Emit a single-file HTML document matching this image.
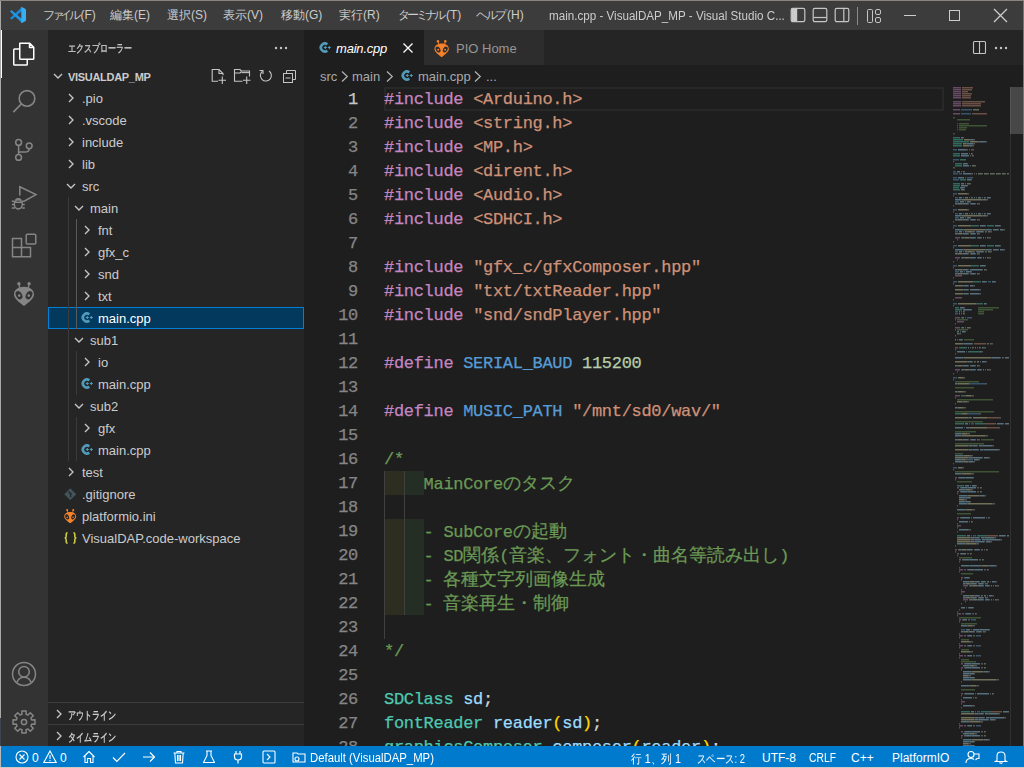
<!DOCTYPE html>
<html><head><meta charset="utf-8">
<style>
*{margin:0;padding:0;box-sizing:border-box}
html,body{width:1024px;height:768px;overflow:hidden;background:#1e1e1e;font-family:"Liberation Sans",sans-serif;font-size:13px;color:#cccccc}
.abs{position:absolute}
#title{left:0;top:0;width:1024px;height:30px;background:#3c3c3c}
#act{left:0;top:30px;width:48px;height:716px;background:#333333}
#side{left:48px;top:30px;width:256px;height:716px;background:#252526}
#tabs{left:304px;top:30px;width:720px;height:35px;background:#252526}
#editor{left:304px;top:65px;width:720px;height:681px}
#status{left:0;top:746px;width:1024px;height:22px;background:#007acc;color:#fff}
.menu{top:7px;font-size:12px;color:#cccccc;white-space:nowrap}
.tree{left:48px;width:256px;height:22px;line-height:22px;font-size:13px;color:#cccccc;white-space:nowrap}
.tree .t{position:absolute;top:1px}
.chev{position:absolute;top:6px;width:10px;height:10px}
.code{position:absolute;left:384px;padding-top:1px;font-family:"Liberation Mono",monospace;font-size:17px;letter-spacing:-0.3px;-webkit-text-stroke:0.25px;line-height:24px;white-space:pre;color:#d4d4d4}
.ln{position:absolute;left:304px;width:54px;padding-top:1px;text-align:right;font-family:"Liberation Mono",monospace;font-size:17px;letter-spacing:-0.3px;-webkit-text-stroke:0.25px;line-height:24px;color:#858585}
.k{color:#c586c0}.s{color:#ce9178}.c{color:#6a9955}.ty{color:#4ec9b0}.v{color:#9cdcfe}.n{color:#b5cea8}.m{color:#569cd6}.f{color:#dcdcaa}.b{color:#ffd700}
.j{font-size:18px;letter-spacing:0}
.sb{top:5px;font-size:12px;transform-origin:0 0;color:#fff;white-space:nowrap}
</style></head><body>
<svg width="0" height="0" style="position:absolute"><defs><mask id="am" maskUnits="userSpaceOnUse" x="0" y="0" width="24" height="24"><rect width="24" height="24" fill="#fff"/><ellipse cx="7" cy="13.2" rx="3" ry="4.4" transform="rotate(-28 7 13.2)" fill="#000"/><ellipse cx="17" cy="13.2" rx="3" ry="4.4" transform="rotate(28 17 13.2)" fill="#000"/><circle cx="7.2" cy="13.6" r="1.3" fill="#fff"/><circle cx="16.8" cy="13.6" r="1.3" fill="#fff"/></mask>
<symbol id="alien" viewBox="0 0 24 24"><g mask="url(#am)"><path d="M12 4.8 C18 4.8 22 8 22 12.5 C22 16.5 16.5 20.5 12 24 C7.5 20.5 2 16.5 2 12.5 C2 8 6 4.8 12 4.8 Z"/><path d="M7.2 2 L7.6 6 M16.8 2 L16.4 6" stroke-width="1.3" stroke="currentColor"/><circle cx="6.9" cy="1.8" r="1.7"/><circle cx="17.1" cy="1.8" r="1.7"/></g></symbol></defs></svg>
<div id="title" class="abs">
<svg class="abs" style="left:0;top:0" width="30" height="30"><path d="M10 18.3 L11.5 19.8 L22 11 L22 7 Z" fill="#1a8ad8"/><path d="M10 11.5 L11.5 10 L22 19 L22 23 Z" fill="#2196e3"/><path d="M21.3 6.8 L25.2 8.7 L26 9.7 V20.3 L25.2 21.3 L21.3 23.2 Z" fill="#38adf5"/></svg>
<span class="abs menu" style="left:43px"><span class="kk" style="letter-spacing:-3.5px;margin-right:3.5px">ファイル</span>(F)</span>
<span class="abs menu" style="left:110px">編集(E)</span>
<span class="abs menu" style="left:167px">選択(S)</span>
<span class="abs menu" style="left:223px">表示(V)</span>
<span class="abs menu" style="left:281px">移動(G)</span>
<span class="abs menu" style="left:339px">実行(R)</span>
<span class="abs menu" style="left:398px"><span class="kk" style="letter-spacing:-3px;margin-right:3px">ターミナル</span>(T)</span>
<span class="abs menu" style="left:476px"><span class="kk" style="letter-spacing:-2.5px;margin-right:2.5px">ヘルプ</span>(H)</span>
<span class="abs menu" style="left:549px;top:9px;font-size:12.5px;transform:scaleX(0.93);transform-origin:0 0">main.cpp - VisualDAP_MP - Visual Studio C...</span>
<svg class="abs" style="left:790px;top:7px" width="16" height="16"><rect x="1.2" y="1.3" width="6" height="13.4" rx="1.2" fill="#cccccc"/><rect x="1.2" y="1.3" width="13.6" height="13.4" rx="1.6" fill="none" stroke="#c5c5c5" stroke-width="1.2"/></svg>
<svg class="abs" style="left:812px;top:7px" width="16" height="16"><rect x="1.2" y="1.3" width="13.6" height="13.4" rx="1.6" fill="none" stroke="#c5c5c5" stroke-width="1.2"/><line x1="1.5" y1="10.5" x2="14.5" y2="10.5" stroke="#c5c5c5" stroke-width="1.2"/></svg>
<svg class="abs" style="left:834px;top:7px" width="16" height="16"><rect x="1.2" y="1.3" width="13.6" height="13.4" rx="1.6" fill="none" stroke="#c5c5c5" stroke-width="1.2"/><line x1="9.8" y1="1.5" x2="9.8" y2="14.5" stroke="#c5c5c5" stroke-width="1.2"/></svg>
<div class="abs" style="left:857px;top:7px;width:1px;height:18px;background:#8a8a8a"></div>
<svg class="abs" style="left:866px;top:8px" width="16" height="16"><rect x="1.5" y="1.5" width="5" height="13" rx="1" fill="none" stroke="#c5c5c5"/><rect x="9.5" y="1.5" width="5" height="5" rx="1.5" fill="none" stroke="#c5c5c5"/><rect x="9.5" y="9.5" width="5" height="5" rx="1.5" fill="none" stroke="#c5c5c5"/></svg>
<div class="abs" style="left:904px;top:15px;width:12px;height:1px;background:#cccccc"></div>
<div class="abs" style="left:949px;top:10px;width:11px;height:11px;border:1px solid #cccccc"></div>
<svg class="abs" style="left:993px;top:8px" width="15" height="15"><path d="M1 1 L14 14 M14 1 L1 14" stroke="#cccccc" stroke-width="1.3"/></svg>
</div>
<div id="act" class="abs">
<div class="abs" style="left:0;top:0;width:2px;height:48px;background:#ffffff"></div>
<svg class="abs" style="left:8px;top:6px" width="32" height="32" viewBox="0 0 32 32" fill="none" stroke="#ffffff" stroke-width="1.5" stroke-linejoin="round"><path d="M11.75 7.15 H21.5 L25.75 11.4 V22.5 Q25.75 23.25 25 23.25 H12.5 Q11.75 23.25 11.75 22.5 Z M21.5 7.15 V11.4 H25.75"/><path d="M11.75 12.95 H6.5 Q5.75 12.95 5.75 13.7 V28.3 Q5.75 29.05 6.5 29.05 H18.5 Q19.25 29.05 19.25 28.3 V23.25"/></svg>
<svg class="abs" style="left:8px;top:52px" width="32" height="32" viewBox="0 0 32 32" fill="none" stroke="#858585" stroke-width="1.6"><circle cx="19" cy="16.4" r="7.8"/><path d="M13.5 21.9 L5.3 30.1"/></svg>
<svg class="abs" style="left:8px;top:104px" width="32" height="32" viewBox="0 0 32 32" fill="none" stroke="#858585" stroke-width="1.5"><circle cx="10.6" cy="8.4" r="2.9"/><circle cx="10.6" cy="23.4" r="2.9"/><circle cx="21.2" cy="11.8" r="2.9"/><path d="M10.6 11.3 V20.5"/><path d="M21.2 14.7 Q21.2 18 17 18 H10.6"/></svg>
<svg class="abs" style="left:8px;top:150px" width="32" height="32" viewBox="0 0 32 32" fill="none" stroke="#858585" stroke-width="1.5"><path d="M11.8 15.5 V6.8 L28 14.6 L16.5 21"/><ellipse cx="10.3" cy="24.3" rx="4" ry="4.6"/><path d="M7.5 20 Q10.3 17.5 13.1 20 M3.8 21.3 H6.5 M14.1 21.3 H16.8 M3.8 24.5 H6.3 M14.3 24.5 H16.8 M3.8 28 H6.8 M13.8 28 H16.8 M6.5 22.3 H14.1"/></svg>
<svg class="abs" style="left:8px;top:200px" width="32" height="32" viewBox="0 0 32 32" fill="none" stroke="#858585" stroke-width="1.5"><path d="M4.5 8.5 H13.5 V17.5 H22.5 V26.7 H4.5 Z M4.5 17.5 H13.5 V26.7"/><rect x="18.2" y="4.3" width="9.6" height="9.6" rx="1.2"/></svg>
<svg class="abs" style="left:12px;top:252px;color:#858585;fill:#858585" width="24" height="24"><use href="#alien"/></svg>
<svg class="abs" style="left:11px;top:631px" width="26" height="26" viewBox="0 0 26 26" fill="none" stroke="#858585" stroke-width="1.5"><circle cx="13" cy="13" r="11.5"/><circle cx="13" cy="10.8" r="5.3"/><path d="M5.8 21.8 Q7.5 16.2 13 16.2 Q18.5 16.2 20.2 21.8"/></svg>
<svg class="abs" style="left:11px;top:679px" width="26" height="26" viewBox="0 0 26 26" fill="none" stroke="#858585" stroke-width="1.5" stroke-linejoin="round"><path d="M10.93 5.27 L10.86 2.01 L15.14 2.01 L15.07 5.27 L17.00 6.07 L19.26 3.71 L22.29 6.74 L19.93 9.00 L20.73 10.93 L23.99 10.86 L23.99 15.14 L20.73 15.07 L19.93 17.00 L22.29 19.26 L19.26 22.29 L17.00 19.93 L15.07 20.73 L15.14 23.99 L10.86 23.99 L10.93 20.73 L9.00 19.93 L6.74 22.29 L3.71 19.26 L6.07 17.00 L5.27 15.07 L2.01 15.14 L2.01 10.86 L5.27 10.93 L6.07 9.00 L3.71 6.74 L6.74 3.71 L9.00 6.07 Z"/><circle cx="13" cy="13" r="2.6"/></svg>
</div>
<div id="side" class="abs"></div>
<span class="abs" style="left:68px;top:41px;font-size:11px;color:#cccccc;-webkit-text-stroke:0.3px;transform:scaleX(0.73);transform-origin:0 0;white-space:nowrap">エクスプローラー</span>
<svg class="abs" style="left:274px;top:46px" width="16" height="4"><circle cx="2" cy="2" r="1.2" fill="#c5c5c5"/><circle cx="7" cy="2" r="1.2" fill="#c5c5c5"/><circle cx="12" cy="2" r="1.2" fill="#c5c5c5"/></svg>
<div class="abs tree" style="top:65px">
<svg class="chev" style="left:5px" viewBox="0 0 10 10"><path d="M1 3 L5 7 L9 3" fill="none" stroke="#c5c5c5" stroke-width="1.35"/></svg>
<span class="t" style="left:20px;font-size:11px;font-weight:bold;color:#cccccc;letter-spacing:-0.3px">VISUALDAP_MP</span>
<svg class="abs" style="left:161px;top:3px" width="18" height="17" viewBox="0 0 18 17" fill="none" stroke="#c5c5c5" stroke-width="1.1"><path d="M9 13.3 H3.2 V1.5 H10 L14 5.5 V7.2"/><path d="M10 1.5 V5.5 H14"/><path d="M13.3 8.5 V16 M9.5 12.2 H17"/></svg>
<svg class="abs" style="left:185px;top:3px" width="18" height="17" viewBox="0 0 18 17" fill="none" stroke="#c5c5c5" stroke-width="1.1"><path d="M9.5 13.3 H1.5 V1.5 H7 L8.5 3 H16.5 V8.5"/><path d="M1.5 5 H7 L8.5 3.5"/><path d="M8.5 4.6 H16.5"/><path d="M13.7 8.5 V16 M10 12.2 H17.5"/></svg>
<svg class="abs" style="left:210px;top:3px" width="16" height="16" viewBox="0 0 16 16" fill="none" stroke="#c5c5c5" stroke-width="1.1"><path d="M4.5 3.2 A5.5 5.5 0 1 0 11 3"/><path d="M1.5 2.5 H5 V6"/></svg>
<svg class="abs" style="left:234px;top:3px" width="16" height="16" viewBox="0 0 16 16" fill="none" stroke="#c5c5c5" stroke-width="1"><rect x="1.5" y="5.5" width="9" height="9"/><path d="M4.5 5.5 V2.5 H13.5 V11.5 H10.5"/><path d="M3.5 10 H8.5"/></svg>
</div>
<div class="abs" style="left:68px;top:197px;width:1px;height:264px;background:#3b3b3b;z-index:2"></div>
<div class="abs" style="left:76px;top:219px;width:1px;height:110px;background:#5a5a5a;z-index:2"></div>
<div class="abs" style="left:76px;top:351px;width:1px;height:44px;background:#3b3b3b;z-index:2"></div>
<div class="abs" style="left:76px;top:417px;width:1px;height:44px;background:#3b3b3b;z-index:2"></div>
<div class="abs tree" style="top:87px;"><svg class="chev" style="left:18px" viewBox="0 0 10 10"><path d="M3 1 L7 5 L3 9" fill="none" stroke="#c5c5c5" stroke-width="1.35"/></svg><span class="t" style="left:34px;color:#cccccc">.pio</span></div>
<div class="abs tree" style="top:109px;"><svg class="chev" style="left:18px" viewBox="0 0 10 10"><path d="M3 1 L7 5 L3 9" fill="none" stroke="#c5c5c5" stroke-width="1.35"/></svg><span class="t" style="left:34px;color:#cccccc">.vscode</span></div>
<div class="abs tree" style="top:131px;"><svg class="chev" style="left:18px" viewBox="0 0 10 10"><path d="M3 1 L7 5 L3 9" fill="none" stroke="#c5c5c5" stroke-width="1.35"/></svg><span class="t" style="left:34px;color:#cccccc">include</span></div>
<div class="abs tree" style="top:153px;"><svg class="chev" style="left:18px" viewBox="0 0 10 10"><path d="M3 1 L7 5 L3 9" fill="none" stroke="#c5c5c5" stroke-width="1.35"/></svg><span class="t" style="left:34px;color:#cccccc">lib</span></div>
<div class="abs tree" style="top:175px;"><svg class="chev" style="left:18px" viewBox="0 0 10 10"><path d="M1 3 L5 7 L9 3" fill="none" stroke="#c5c5c5" stroke-width="1.35"/></svg><span class="t" style="left:34px;color:#cccccc">src</span></div>
<div class="abs tree" style="top:197px;"><svg class="chev" style="left:26px" viewBox="0 0 10 10"><path d="M1 3 L5 7 L9 3" fill="none" stroke="#c5c5c5" stroke-width="1.35"/></svg><span class="t" style="left:42px;color:#cccccc">main</span></div>
<div class="abs tree" style="top:219px;"><svg class="chev" style="left:34px" viewBox="0 0 10 10"><path d="M3 1 L7 5 L3 9" fill="none" stroke="#c5c5c5" stroke-width="1.35"/></svg><span class="t" style="left:50px;color:#cccccc">fnt</span></div>
<div class="abs tree" style="top:241px;"><svg class="chev" style="left:34px" viewBox="0 0 10 10"><path d="M3 1 L7 5 L3 9" fill="none" stroke="#c5c5c5" stroke-width="1.35"/></svg><span class="t" style="left:50px;color:#cccccc">gfx_c</span></div>
<div class="abs tree" style="top:263px;"><svg class="chev" style="left:34px" viewBox="0 0 10 10"><path d="M3 1 L7 5 L3 9" fill="none" stroke="#c5c5c5" stroke-width="1.35"/></svg><span class="t" style="left:50px;color:#cccccc">snd</span></div>
<div class="abs tree" style="top:285px;"><svg class="chev" style="left:34px" viewBox="0 0 10 10"><path d="M3 1 L7 5 L3 9" fill="none" stroke="#c5c5c5" stroke-width="1.35"/></svg><span class="t" style="left:50px;color:#cccccc">txt</span></div>
<div class="abs tree" style="top:307px;background:#04395e;outline:1px solid #007fd4;outline-offset:-1px;"><svg class="abs cpp" style="left:33px;top:5px" width="13" height="12" viewBox="0 0 13 12"><path d="M8.3 2.3 A4 4 0 1 0 8.3 8.7" stroke="#519aba" stroke-width="2.7" fill="none"/><path d="M4.8 5.5 H7.8 M6.3 4 V7 M8.8 5.5 H11.8 M10.3 4 V7" stroke="#519aba" stroke-width="1.1"/></svg><span class="t" style="left:50px;color:#ffffff">main.cpp</span></div>
<div class="abs tree" style="top:329px;"><svg class="chev" style="left:26px" viewBox="0 0 10 10"><path d="M1 3 L5 7 L9 3" fill="none" stroke="#c5c5c5" stroke-width="1.35"/></svg><span class="t" style="left:42px;color:#cccccc">sub1</span></div>
<div class="abs tree" style="top:351px;"><svg class="chev" style="left:34px" viewBox="0 0 10 10"><path d="M3 1 L7 5 L3 9" fill="none" stroke="#c5c5c5" stroke-width="1.35"/></svg><span class="t" style="left:50px;color:#cccccc">io</span></div>
<div class="abs tree" style="top:373px;"><svg class="abs cpp" style="left:33px;top:5px" width="13" height="12" viewBox="0 0 13 12"><path d="M8.3 2.3 A4 4 0 1 0 8.3 8.7" stroke="#519aba" stroke-width="2.7" fill="none"/><path d="M4.8 5.5 H7.8 M6.3 4 V7 M8.8 5.5 H11.8 M10.3 4 V7" stroke="#519aba" stroke-width="1.1"/></svg><span class="t" style="left:50px;color:#cccccc">main.cpp</span></div>
<div class="abs tree" style="top:395px;"><svg class="chev" style="left:26px" viewBox="0 0 10 10"><path d="M1 3 L5 7 L9 3" fill="none" stroke="#c5c5c5" stroke-width="1.35"/></svg><span class="t" style="left:42px;color:#cccccc">sub2</span></div>
<div class="abs tree" style="top:417px;"><svg class="chev" style="left:34px" viewBox="0 0 10 10"><path d="M3 1 L7 5 L3 9" fill="none" stroke="#c5c5c5" stroke-width="1.35"/></svg><span class="t" style="left:50px;color:#cccccc">gfx</span></div>
<div class="abs tree" style="top:439px;"><svg class="abs cpp" style="left:33px;top:5px" width="13" height="12" viewBox="0 0 13 12"><path d="M8.3 2.3 A4 4 0 1 0 8.3 8.7" stroke="#519aba" stroke-width="2.7" fill="none"/><path d="M4.8 5.5 H7.8 M6.3 4 V7 M8.8 5.5 H11.8 M10.3 4 V7" stroke="#519aba" stroke-width="1.1"/></svg><span class="t" style="left:50px;color:#cccccc">main.cpp</span></div>
<div class="abs tree" style="top:461px;"><svg class="chev" style="left:18px" viewBox="0 0 10 10"><path d="M3 1 L7 5 L3 9" fill="none" stroke="#c5c5c5" stroke-width="1.35"/></svg><span class="t" style="left:34px;color:#cccccc">test</span></div>
<div class="abs tree" style="top:483px;"><svg class="abs" style="left:15.5px;top:4.5px" width="12.5" height="12.5" viewBox="0 0 12 12"><path d="M6 0.3 L11.7 6 L6 11.7 L0.3 6 Z" fill="#41535b"/><path d="M4.2 3.2 L6.6 5.6 M6.3 5.4 V8.8" stroke="#252526" stroke-width="1.1"/><circle cx="6.4" cy="5.6" r="1" fill="#252526"/></svg><span class="t" style="left:34px;color:#cccccc">.gitignore</span></div>
<div class="abs tree" style="top:505px;"><svg class="abs" style="left:15px;top:4px;color:#f5822a;fill:#f5822a" width="14.4" height="14.4"><use href="#alien"/></svg><span class="t" style="left:34px;color:#cccccc">platformio.ini</span></div>
<div class="abs tree" style="top:527px;"><svg class="abs" style="left:16px;top:5px" width="13" height="12" viewBox="0 0 13 12" fill="none" stroke="#cbcb41" stroke-width="1.6"><path d="M3.6 0.8 Q2.2 0.8 2.2 2.2 V4.3 Q2.2 6 0.6 6 Q2.2 6 2.2 7.7 V9.8 Q2.2 11.2 3.6 11.2"/><path d="M9.4 0.8 Q10.8 0.8 10.8 2.2 V4.3 Q10.8 6 12.4 6 Q10.8 6 10.8 7.7 V9.8 Q10.8 11.2 9.4 11.2"/></svg><span class="t" style="left:34px;color:#cccccc">VisualDAP.code-workspace</span></div>
<div class="abs" style="left:48px;top:702px;width:256px;height:1px;background:#3c3c3c"></div>
<div class="abs tree" style="top:703px"><svg class="chev" style="left:6px" viewBox="0 0 10 10"><path d="M3 1 L7 5 L3 9" fill="none" stroke="#c5c5c5" stroke-width="1.35"/></svg><span class="t" style="left:20px;font-size:11px;font-weight:bold;transform:scaleX(0.73);transform-origin:0 0">アウトライン</span></div>
<div class="abs" style="left:48px;top:724px;width:256px;height:1px;background:#3c3c3c"></div>
<div class="abs tree" style="top:725px"><svg class="chev" style="left:6px" viewBox="0 0 10 10"><path d="M3 1 L7 5 L3 9" fill="none" stroke="#c5c5c5" stroke-width="1.35"/></svg><span class="t" style="left:20px;font-size:11px;font-weight:bold;transform:scaleX(0.73);transform-origin:0 0">タイムライン</span></div>

<div id="tabs" class="abs">
<div class="abs" style="left:0;top:0;width:120px;height:35px;background:#1e1e1e"></div>
<svg class="abs cpp" style="left:15px;top:12px" width="13" height="12" viewBox="0 0 13 12"><path d="M8.3 2.3 A4 4 0 1 0 8.3 8.7" stroke="#519aba" stroke-width="2.7" fill="none"/><path d="M4.8 5.5 H7.8 M6.3 4 V7 M8.8 5.5 H11.8 M10.3 4 V7" stroke="#519aba" stroke-width="1.1"/></svg>
<span class="abs" style="left:32px;top:11px;font-style:italic;color:#ffffff;font-size:13px;letter-spacing:-0.2px">main.cpp</span>
<svg class="abs" style="left:98px;top:12px" width="12" height="12"><path d="M1.5 1.5 L10.5 10.5 M10.5 1.5 L1.5 10.5" stroke="#ffffff" stroke-width="1.3"/></svg>
<div class="abs" style="left:120px;top:0;width:120px;height:35px;background:#2d2d2d"></div>
<svg class="abs" style="left:129px;top:9.5px;color:#f5822a;fill:#f5822a" width="17.3" height="17.3"><use href="#alien"/></svg>
<span class="abs" style="left:152px;top:11px;color:#969696;font-size:13px">PIO Home</span>
<svg class="abs" style="left:667px;top:10px" width="16" height="16" viewBox="0 0 16 16" fill="none" stroke="#c5c5c5" stroke-width="1.1"><rect x="2.5" y="1.5" width="12" height="12" rx="1"/><path d="M8.5 1.5 V13.5"/></svg>
<svg class="abs" style="left:690px;top:16px" width="14" height="4"><circle cx="2" cy="2" r="1.2" fill="#c5c5c5"/><circle cx="7" cy="2" r="1.2" fill="#c5c5c5"/><circle cx="12" cy="2" r="1.2" fill="#c5c5c5"/></svg>
</div>
<span class="abs" style="left:320px;top:69px;color:#a9a9a9;font-size:13px">src</span>
<svg class="abs" style="left:341px;top:71px" width="8" height="11"><path d="M1 0.5 L6.3 5.5 L1 10.5" fill="none" stroke="#b4b4b4" stroke-width="1.2"/></svg>
<span class="abs" style="left:352px;top:69px;color:#a9a9a9;font-size:13px">main</span>
<svg class="abs" style="left:386px;top:71px" width="8" height="11"><path d="M1 0.5 L6.3 5.5 L1 10.5" fill="none" stroke="#b4b4b4" stroke-width="1.2"/></svg>
<svg class="abs cpp" style="left:401px;top:70px" width="13" height="12" viewBox="0 0 13 12"><path d="M8.3 2.3 A4 4 0 1 0 8.3 8.7" stroke="#519aba" stroke-width="2.7" fill="none"/><path d="M4.8 5.5 H7.8 M6.3 4 V7 M8.8 5.5 H11.8 M10.3 4 V7" stroke="#519aba" stroke-width="1.1"/></svg>
<span class="abs" style="left:418px;top:69px;color:#a9a9a9;font-size:13px">main.cpp</span>
<svg class="abs" style="left:474px;top:71px" width="8" height="11"><path d="M1 0.5 L6.3 5.5 L1 10.5" fill="none" stroke="#b4b4b4" stroke-width="1.2"/></svg>
<span class="abs" style="left:486px;top:69px;color:#a9a9a9;font-size:13px">...</span>

<div id="editor" class="abs"></div>
<div class="abs" style="left:384px;top:87px;width:560px;height:24px;border:2px solid #282828"></div>
<div class="abs" style="left:384px;top:471px;width:20px;height:24px;background:#2e2e20"></div>
<div class="abs" style="left:404px;top:471px;width:20px;height:24px;background:#252e25"></div>
<div class="abs" style="left:384px;top:519px;width:20px;height:24px;background:#2e2e20"></div>
<div class="abs" style="left:404px;top:519px;width:20px;height:24px;background:#252e25"></div>
<div class="abs" style="left:384px;top:543px;width:20px;height:24px;background:#2e2e20"></div>
<div class="abs" style="left:404px;top:543px;width:20px;height:24px;background:#252e25"></div>
<div class="abs" style="left:384px;top:567px;width:20px;height:24px;background:#2e2e20"></div>
<div class="abs" style="left:404px;top:567px;width:20px;height:24px;background:#252e25"></div>
<div class="abs" style="left:384px;top:591px;width:20px;height:24px;background:#2e2e20"></div>
<div class="abs" style="left:404px;top:591px;width:20px;height:24px;background:#252e25"></div>
<div class="abs" style="left:384px;top:471px;width:1px;height:168px;background:#404040"></div>
<div class="abs" style="left:404px;top:471px;width:1px;height:144px;background:#404040"></div>
<div class="ln" style="top:87px;color:#c6c6c6">1</div>
<div class="code" style="top:87px"><span class="k">#include</span> <span class="s">&lt;Arduino.h&gt;</span></div>
<div class="ln" style="top:111px;color:#858585">2</div>
<div class="code" style="top:111px"><span class="k">#include</span> <span class="s">&lt;string.h&gt;</span></div>
<div class="ln" style="top:135px;color:#858585">3</div>
<div class="code" style="top:135px"><span class="k">#include</span> <span class="s">&lt;MP.h&gt;</span></div>
<div class="ln" style="top:159px;color:#858585">4</div>
<div class="code" style="top:159px"><span class="k">#include</span> <span class="s">&lt;dirent.h&gt;</span></div>
<div class="ln" style="top:183px;color:#858585">5</div>
<div class="code" style="top:183px"><span class="k">#include</span> <span class="s">&lt;Audio.h&gt;</span></div>
<div class="ln" style="top:207px;color:#858585">6</div>
<div class="code" style="top:207px"><span class="k">#include</span> <span class="s">&lt;SDHCI.h&gt;</span></div>
<div class="ln" style="top:231px;color:#858585">7</div>
<div class="ln" style="top:255px;color:#858585">8</div>
<div class="code" style="top:255px"><span class="k">#include</span> <span class="s">"gfx_c/gfxComposer.hpp"</span></div>
<div class="ln" style="top:279px;color:#858585">9</div>
<div class="code" style="top:279px"><span class="k">#include</span> <span class="s">"txt/txtReader.hpp"</span></div>
<div class="ln" style="top:303px;color:#858585">10</div>
<div class="code" style="top:303px"><span class="k">#include</span> <span class="s">"snd/sndPlayer.hpp"</span></div>
<div class="ln" style="top:327px;color:#858585">11</div>
<div class="ln" style="top:351px;color:#858585">12</div>
<div class="code" style="top:351px"><span class="k">#define</span> <span class="m">SERIAL_BAUD</span> <span class="n">115200</span></div>
<div class="ln" style="top:375px;color:#858585">13</div>
<div class="ln" style="top:399px;color:#858585">14</div>
<div class="code" style="top:399px"><span class="k">#define</span> <span class="m">MUSIC_PATH</span> <span class="s">"/mnt/sd0/wav/"</span></div>
<div class="ln" style="top:423px;color:#858585">15</div>
<div class="ln" style="top:447px;color:#858585">16</div>
<div class="code" style="top:447px"><span class="c">/*</span></div>
<div class="ln" style="top:471px;color:#858585">17</div>
<div class="code" style="top:471px"><span class="c">    MainCore<span class="j">のタスク</span></span></div>
<div class="ln" style="top:495px;color:#858585">18</div>
<div class="ln" style="top:519px;color:#858585">19</div>
<div class="code" style="top:519px"><span class="c">    - SubCore<span class="j">の起動</span></span></div>
<div class="ln" style="top:543px;color:#858585">20</div>
<div class="code" style="top:543px"><span class="c">    - SD<span class="j">関係</span>(<span class="j">音楽、フォント・曲名等読み出し</span>)</span></div>
<div class="ln" style="top:567px;color:#858585">21</div>
<div class="code" style="top:567px"><span class="c">    - <span class="j">各種文字列画像生成</span></span></div>
<div class="ln" style="top:591px;color:#858585">22</div>
<div class="code" style="top:591px"><span class="c">    - <span class="j">音楽再生・制御</span></span></div>
<div class="ln" style="top:615px;color:#858585">23</div>
<div class="ln" style="top:639px;color:#858585">24</div>
<div class="code" style="top:639px"><span class="c">*/</span></div>
<div class="ln" style="top:663px;color:#858585">25</div>
<div class="ln" style="top:687px;color:#858585">26</div>
<div class="code" style="top:687px"><span class="ty">SDClass</span> <span class="v">sd</span>;</div>
<div class="ln" style="top:711px;color:#858585">27</div>
<div class="code" style="top:711px"><span class="ty">fontReader</span> <span class="v">reader</span><span class="b">(</span><span class="v">sd</span><span class="b">)</span>;</div>
<div class="ln" style="top:735px;color:#858585">28</div>
<div class="code" style="top:735px"><span class="ty">graphicsComposer</span> <span class="v">composer</span><span class="b">(</span><span class="v">reader</span><span class="b">)</span>;</div>
<!--MINI--><svg class="abs" style="left:953px;top:87px" width="56" height="659"><path fill="#654a63" d="M0 0h8v1.4h-8zM0 2h8v1.4h-8zM0 4h8v1.4h-8zM0 6h8v1.4h-8zM0 8h8v1.4h-8zM0 10h8v1.4h-8zM0 14h8v1.4h-8zM0 16h8v1.4h-8zM0 18h8v1.4h-8zM0 22h7v1.4h-7zM0 26h7v1.4h-7zM2 150h5v1.4h-5zM2 170h5v1.4h-5zM2 188h6v1.4h-6zM2 210h6v1.4h-6zM2 230h5v1.4h-5zM4 234h6v1.4h-6zM2 240h5v1.4h-5zM2 260h3v1.4h-3zM2 282h5v1.4h-5zM2 308h5v1.4h-5zM2 390h2v1.4h-2zM4 400h2v1.4h-2zM4 404h2v1.4h-2zM4 430h2v1.4h-2zM4 438h4v1.4h-4zM2 462h2v1.4h-2zM4 466h2v1.4h-2zM6 472h2v1.4h-2zM6 482h4v1.4h-4zM11 482h2v1.4h-2zM8 490h2v1.4h-2zM10 498h5v1.4h-5zM8 504h4v1.4h-4zM10 512h5v1.4h-5zM4 526h4v1.4h-4zM9 526h2v1.4h-2zM6 532h2v1.4h-2zM6 548h4v1.4h-4zM11 548h2v1.4h-2zM6 558h4v1.4h-4zM11 558h2v1.4h-2zM6 568h4v1.4h-4zM11 568h2v1.4h-2zM8 576h2v1.4h-2zM8 580h2v1.4h-2zM8 606h2v1.4h-2zM8 614h4v1.4h-4zM6 638h4v1.4h-4zM11 638h2v1.4h-2zM8 644h2v1.4h-2zM8 648h2v1.4h-2z"/><path fill="#694f44" d="M9 0h11v1.4h-11zM9 2h10v1.4h-10zM9 4h6v1.4h-6zM9 6h10v1.4h-10zM9 8h9v1.4h-9zM9 10h9v1.4h-9zM9 14h23v1.4h-23zM9 16h19v1.4h-19zM9 18h19v1.4h-19zM19 26h15v1.4h-15zM18 62h2v1.4h-2zM21 256h11v1.4h-11zM35 330h10v1.4h-10zM32 336h10v1.4h-10zM35 340h10v1.4h-10zM34 448h10v1.4h-10zM38 624h10v1.4h-10z"/><path fill="#36546c" d="M8 22h11v1.4h-11zM8 26h10v1.4h-10zM0 62h4v1.4h-4zM0 72h6v1.4h-6zM0 84h3v1.4h-3zM0 86h5v1.4h-5zM6 86h3v1.4h-3zM0 90h4v1.4h-4zM14 90h5v1.4h-5zM0 92h6v1.4h-6zM0 106h4v1.4h-4zM2 110h3v1.4h-3zM2 114h4v1.4h-4zM0 122h4v1.4h-4zM2 126h3v1.4h-3zM2 130h4v1.4h-4zM0 138h4v1.4h-4zM2 144h3v1.4h-3zM0 158h4v1.4h-4zM2 164h3v1.4h-3zM0 178h4v1.4h-4zM2 184h4v1.4h-4zM0 194h4v1.4h-4zM35 194h3v1.4h-3zM0 216h4v1.4h-4zM2 224h3v1.4h-3zM2 226h3v1.4h-3zM14 230h4v1.4h-4zM0 290h4v1.4h-4zM17 296h15v1.4h-15zM15 326h11v1.4h-11zM18 336h3v1.4h-3zM13 372h6v1.4h-6zM0 380h4v1.4h-4zM20 448h3v1.4h-3zM18 532h4v1.4h-4zM8 542h4v1.4h-4zM23 548h4v1.4h-4zM23 558h4v1.4h-4zM23 568h4v1.4h-4zM24 624h3v1.4h-3zM23 638h4v1.4h-4z"/><path fill="#5e6959" d="M20 22h6v1.4h-6zM18 66h1v1.4h-1zM19 68h1v1.4h-1zM19 78h3v1.4h-3zM10 84h1v1.4h-1zM25 86h4v1.4h-4zM31 86h4v1.4h-4zM37 86h4v1.4h-4zM43 86h4v1.4h-4zM49 86h3v1.4h-3zM54 86h2v1.4h-2zM14 96h3v1.4h-3zM18 110h1v1.4h-1zM31 110h1v1.4h-1zM24 116h1v1.4h-1zM18 126h1v1.4h-1zM31 126h1v1.4h-1zM24 132h1v1.4h-1zM20 144h1v1.4h-1zM32 144h1v1.4h-1zM35 144h2v1.4h-2zM24 146h1v1.4h-1zM30 150h1v1.4h-1zM34 150h1v1.4h-1zM20 164h1v1.4h-1zM32 164h1v1.4h-1zM35 164h2v1.4h-2zM24 166h1v1.4h-1zM30 170h1v1.4h-1zM34 170h1v1.4h-1zM31 182h1v1.4h-1zM24 186h1v1.4h-1zM10 224h1v1.4h-1zM10 226h1v1.4h-1zM14 240h3v1.4h-3zM37 256h1v1.4h-1zM19 260h1v1.4h-1zM49 270h1v1.4h-1zM21 274h1v1.4h-1zM24 278h1v1.4h-1zM30 282h1v1.4h-1zM34 282h1v1.4h-1zM10 314h4v1.4h-4zM24 352h1v1.4h-1zM27 400h1v1.4h-1zM27 404h1v1.4h-1zM35 430h1v1.4h-1zM18 434h1v1.4h-1zM28 462h1v1.4h-1zM33 462h1v1.4h-1zM17 466h1v1.4h-1zM29 472h1v1.4h-1zM34 482h1v1.4h-1zM32 496h1v1.4h-1zM38 498h1v1.4h-1zM42 498h1v1.4h-1zM28 508h1v1.4h-1zM32 510h1v1.4h-1zM38 512h1v1.4h-1zM42 512h1v1.4h-1zM22 526h1v1.4h-1zM30 544h1v1.4h-1zM31 576h1v1.4h-1zM31 580h1v1.4h-1zM39 606h1v1.4h-1zM22 610h1v1.4h-1zM31 644h1v1.4h-1zM31 648h1v1.4h-1z"/><path fill="#3e5235" d="M0 30h2v1.4h-2zM4 32h13v1.4h-13zM4 36h1v1.4h-1zM6 36h10v1.4h-10zM4 38h1v1.4h-1zM6 38h28v1.4h-28zM4 40h1v1.4h-1zM6 40h8v1.4h-8zM4 42h1v1.4h-1zM6 42h7v1.4h-7zM0 46h2v1.4h-2zM25 220h21v1.4h-21zM25 222h15v1.4h-15zM25 224h6v1.4h-6zM25 226h6v1.4h-6zM4 232h11v1.4h-11zM4 242h11v1.4h-11zM11 252h10v1.4h-10zM2 294h24v1.4h-24zM2 300h19v1.4h-19zM4 312h36v1.4h-36zM2 324h39v1.4h-39zM2 334h28v1.4h-28zM2 344h21v1.4h-21zM28 352h13v1.4h-13zM2 356h29v1.4h-29zM2 366h8v1.4h-8zM2 384h44v1.4h-44zM4 394h15v1.4h-15zM4 426h14v1.4h-14zM6 470h13v1.4h-13zM8 486h12v1.4h-12zM6 530h22v1.4h-22zM8 536h16v1.4h-16zM8 552h8v1.4h-8zM8 562h8v1.4h-8zM8 572h8v1.4h-8zM8 574h15v1.4h-15zM8 602h14v1.4h-14z"/><path fill="#32675c" d="M0 50h7v1.4h-7zM0 52h10v1.4h-10zM0 54h16v1.4h-16zM0 56h9v1.4h-9zM0 58h9v1.4h-9zM0 66h7v1.4h-7zM0 68h7v1.4h-7zM7 72h6v1.4h-6zM2 76h7v1.4h-7zM2 78h7v1.4h-7zM7 92h6v1.4h-6zM0 96h7v1.4h-7zM0 98h7v1.4h-7zM0 100h6v1.4h-6zM0 102h7v1.4h-7zM19 138h6v1.4h-6zM34 138h6v1.4h-6zM19 158h6v1.4h-6zM34 158h6v1.4h-6zM19 178h6v1.4h-6zM21 194h7v1.4h-7zM24 216h6v1.4h-6zM2 220h4v1.4h-4zM2 222h6v1.4h-6zM7 260h6v1.4h-6zM15 264h11v1.4h-11zM10 308h2v1.4h-2zM2 326h6v1.4h-6zM2 336h9v1.4h-9zM22 336h9v1.4h-9zM4 398h7v1.4h-7zM4 448h9v1.4h-9zM24 448h9v1.4h-9zM8 624h9v1.4h-9zM28 624h9v1.4h-9z"/><path fill="#546f7d" d="M8 50h2v1.4h-2zM18 52h2v1.4h-2zM26 54h6v1.4h-6zM14 56h6v1.4h-6zM17 58h2v1.4h-2zM5 62h8v1.4h-8zM8 66h7v1.4h-7zM8 68h8v1.4h-8zM10 76h4v1.4h-4zM10 78h6v1.4h-6zM4 84h3v1.4h-3zM10 86h8v1.4h-8zM5 90h6v1.4h-6zM14 92h4v1.4h-4zM8 96h3v1.4h-3zM8 98h6v1.4h-6zM7 100h4v1.4h-4zM8 102h3v1.4h-3zM6 110h3v1.4h-3zM12 110h3v1.4h-3zM21 110h1v1.4h-1zM25 110h3v1.4h-3zM34 110h3v1.4h-3zM2 112h6v1.4h-6zM30 112h3v1.4h-3zM7 114h4v1.4h-4zM14 114h3v1.4h-3zM2 116h2v1.4h-2zM10 116h5v1.4h-5zM18 116h4v1.4h-4zM6 126h3v1.4h-3zM12 126h3v1.4h-3zM21 126h1v1.4h-1zM25 126h3v1.4h-3zM34 126h3v1.4h-3zM2 128h6v1.4h-6zM30 128h3v1.4h-3zM7 130h4v1.4h-4zM14 130h3v1.4h-3zM2 132h2v1.4h-2zM10 132h5v1.4h-5zM18 132h4v1.4h-4zM27 138h5v1.4h-5zM42 138h5v1.4h-5zM2 142h8v1.4h-8zM33 142h5v1.4h-5zM40 142h5v1.4h-5zM47 142h3v1.4h-3zM6 144h3v1.4h-3zM12 144h2v1.4h-2zM24 144h6v1.4h-6zM2 146h2v1.4h-2zM10 146h5v1.4h-5zM18 146h4v1.4h-4zM9 150h2v1.4h-2zM17 150h5v1.4h-5zM25 150h3v1.4h-3zM27 158h5v1.4h-5zM42 158h5v1.4h-5zM2 162h8v1.4h-8zM33 162h5v1.4h-5zM40 162h5v1.4h-5zM47 162h3v1.4h-3zM6 164h3v1.4h-3zM12 164h2v1.4h-2zM24 164h6v1.4h-6zM2 166h2v1.4h-2zM10 166h5v1.4h-5zM18 166h4v1.4h-4zM9 170h2v1.4h-2zM17 170h5v1.4h-5zM25 170h3v1.4h-3zM27 178h5v1.4h-5zM2 182h2v1.4h-2zM10 182h5v1.4h-5zM17 182h12v1.4h-12zM7 184h3v1.4h-3zM13 184h5v1.4h-5zM2 186h2v1.4h-2zM10 186h5v1.4h-5zM18 186h4v1.4h-4zM29 194h4v1.4h-4zM39 194h3v1.4h-3zM11 198h4v1.4h-4zM17 198h3v1.4h-3zM11 202h4v1.4h-4zM17 202h9v1.4h-9zM11 206h4v1.4h-4zM17 206h9v1.4h-9zM31 216h2v1.4h-2zM7 220h4v1.4h-4zM10 222h8v1.4h-8zM6 224h1v1.4h-1zM6 226h1v1.4h-1zM9 230h2v1.4h-2zM9 240h2v1.4h-2zM4 244h2v1.4h-2zM9 244h3v1.4h-3zM4 246h1v1.4h-1zM2 252h1v1.4h-1zM6 252h3v1.4h-3zM11 256h8v1.4h-8zM34 256h1v1.4h-1zM15 260h1v1.4h-1zM22 260h1v1.4h-1zM26 260h1v1.4h-1zM29 260h1v1.4h-1zM4 264h8v1.4h-8zM27 264h1v1.4h-1zM2 270h8v1.4h-8zM39 270h8v1.4h-8zM52 270h4v1.4h-4zM15 274h4v1.4h-4zM24 274h2v1.4h-2zM29 274h3v1.4h-3zM2 278h2v1.4h-2zM10 278h5v1.4h-5zM18 278h4v1.4h-4zM9 282h2v1.4h-2zM17 282h5v1.4h-5zM25 282h3v1.4h-3zM2 296h2v1.4h-2zM2 304h2v1.4h-2zM2 320h2v1.4h-2zM16 330h2v1.4h-2zM12 336h3v1.4h-3zM44 336h6v1.4h-6zM52 336h4v1.4h-4zM2 340h8v1.4h-8zM13 340h3v1.4h-3zM2 346h6v1.4h-6zM2 348h6v1.4h-6zM2 352h2v1.4h-2zM10 352h5v1.4h-5zM18 352h4v1.4h-4zM16 358h3v1.4h-3zM20 358h4v1.4h-4zM26 358h3v1.4h-3zM30 358h9v1.4h-9zM16 362h3v1.4h-3zM20 362h5v1.4h-5zM27 362h3v1.4h-3zM31 362h14v1.4h-14zM2 368h8v1.4h-8zM16 370h3v1.4h-3zM20 370h9v1.4h-9zM31 370h4v1.4h-4zM2 372h6v1.4h-6zM21 372h4v1.4h-4zM2 374h8v1.4h-8zM16 374h4v1.4h-4zM2 386h6v1.4h-6zM6 390h6v1.4h-6zM13 390h7v1.4h-7zM12 398h4v1.4h-4zM19 398h4v1.4h-4zM8 400h6v1.4h-6zM15 400h8v1.4h-8zM6 402h6v1.4h-6zM8 404h6v1.4h-6zM15 404h8v1.4h-8zM6 408h8v1.4h-8zM27 408h4v1.4h-4zM6 410h6v1.4h-6zM13 410h4v1.4h-4zM6 414h6v1.4h-6zM13 414h4v1.4h-4zM6 416h8v1.4h-8zM4 422h8v1.4h-8zM8 430h9v1.4h-9zM20 430h12v1.4h-12zM6 434h9v1.4h-9zM6 442h9v1.4h-9zM14 448h3v1.4h-3zM46 448h6v1.4h-6zM54 448h2v1.4h-2zM18 450h3v1.4h-3zM22 450h4v1.4h-4zM28 450h3v1.4h-3zM32 450h9v1.4h-9zM18 452h3v1.4h-3zM22 452h5v1.4h-5zM29 452h3v1.4h-3zM33 452h14v1.4h-14zM18 454h3v1.4h-3zM22 454h9v1.4h-9zM33 454h4v1.4h-4zM4 456h8v1.4h-8zM6 462h2v1.4h-2zM14 462h5v1.4h-5zM22 462h4v1.4h-4zM8 466h5v1.4h-5zM10 472h6v1.4h-6zM17 472h8v1.4h-8zM8 478h8v1.4h-8zM17 478h11v1.4h-11zM36 478h6v1.4h-6zM15 482h6v1.4h-6zM22 482h8v1.4h-8zM12 490h4v1.4h-4zM10 494h6v1.4h-6zM22 494h4v1.4h-4zM28 494h4v1.4h-4zM34 494h2v1.4h-2zM39 494h3v1.4h-3zM10 496h2v1.4h-2zM18 496h5v1.4h-5zM26 496h4v1.4h-4zM17 498h2v1.4h-2zM25 498h5v1.4h-5zM33 498h3v1.4h-3zM10 508h6v1.4h-6zM22 508h4v1.4h-4zM31 508h2v1.4h-2zM36 508h3v1.4h-3zM10 510h2v1.4h-2zM18 510h5v1.4h-5zM26 510h4v1.4h-4zM17 512h2v1.4h-2zM25 512h5v1.4h-5zM33 512h3v1.4h-3zM8 520h4v1.4h-4zM16 520h4v1.4h-4zM13 526h5v1.4h-5zM10 532h4v1.4h-4zM8 538h6v1.4h-6zM13 542h4v1.4h-4zM20 542h6v1.4h-6zM27 542h9v1.4h-9zM8 544h2v1.4h-2zM16 544h5v1.4h-5zM24 544h4v1.4h-4zM15 548h4v1.4h-4zM15 558h4v1.4h-4zM15 568h4v1.4h-4zM12 576h6v1.4h-6zM19 576h8v1.4h-8zM10 578h6v1.4h-6zM12 580h6v1.4h-6zM19 580h8v1.4h-8zM10 584h8v1.4h-8zM31 584h4v1.4h-4zM10 586h6v1.4h-6zM17 586h4v1.4h-4zM10 590h6v1.4h-6zM17 590h4v1.4h-4zM10 592h8v1.4h-8zM8 598h8v1.4h-8zM12 606h9v1.4h-9zM24 606h12v1.4h-12zM10 610h9v1.4h-9zM10 618h9v1.4h-9zM18 624h3v1.4h-3zM50 624h6v1.4h-6zM22 626h3v1.4h-3zM26 626h4v1.4h-4zM32 626h3v1.4h-3zM36 626h9v1.4h-9zM22 630h3v1.4h-3zM26 630h5v1.4h-5zM33 630h3v1.4h-3zM37 630h14v1.4h-14zM22 632h3v1.4h-3zM26 632h9v1.4h-9zM37 632h4v1.4h-4zM8 634h8v1.4h-8zM15 638h4v1.4h-4zM12 644h6v1.4h-6zM19 644h8v1.4h-8zM10 646h6v1.4h-6zM12 648h6v1.4h-6zM19 648h8v1.4h-8zM10 652h8v1.4h-8zM31 652h4v1.4h-4zM10 654h6v1.4h-6zM17 654h4v1.4h-4zM10 658h6v1.4h-6zM17 658h4v1.4h-4z"/><path fill="#545454" d="M10 50h1v1.4h-1zM17 52h1v1.4h-1zM20 52h1v1.4h-1zM21 52h1v1.4h-1zM25 54h1v1.4h-1zM32 54h1v1.4h-1zM33 54h1v1.4h-1zM13 56h1v1.4h-1zM20 56h1v1.4h-1zM21 56h1v1.4h-1zM16 58h1v1.4h-1zM19 58h1v1.4h-1zM20 58h1v1.4h-1zM13 62h1v1.4h-1zM14 62h1v1.4h-1zM16 62h1v1.4h-1zM20 62h1v1.4h-1zM16 66h1v1.4h-1zM19 66h1v1.4h-1zM17 68h1v1.4h-1zM20 68h1v1.4h-1zM0 74h1v1.4h-1zM14 76h1v1.4h-1zM17 78h1v1.4h-1zM22 78h1v1.4h-1zM0 80h1v1.4h-1zM1 80h1v1.4h-1zM8 84h1v1.4h-1zM11 84h1v1.4h-1zM18 86h1v1.4h-1zM19 86h1v1.4h-1zM21 86h1v1.4h-1zM23 86h1v1.4h-1zM29 86h1v1.4h-1zM35 86h1v1.4h-1zM41 86h1v1.4h-1zM47 86h1v1.4h-1zM52 86h1v1.4h-1zM12 90h1v1.4h-1zM19 90h1v1.4h-1zM18 92h1v1.4h-1zM12 96h1v1.4h-1zM17 96h1v1.4h-1zM14 98h1v1.4h-1zM11 100h1v1.4h-1zM11 102h1v1.4h-1zM14 106h1v1.4h-1zM15 106h1v1.4h-1zM0 108h1v1.4h-1zM10 110h1v1.4h-1zM16 110h1v1.4h-1zM19 110h1v1.4h-1zM23 110h1v1.4h-1zM29 110h1v1.4h-1zM32 110h1v1.4h-1zM37 110h1v1.4h-1zM8 112h1v1.4h-1zM29 112h1v1.4h-1zM33 112h1v1.4h-1zM34 112h1v1.4h-1zM12 114h1v1.4h-1zM17 114h1v1.4h-1zM4 116h1v1.4h-1zM9 116h1v1.4h-1zM15 116h1v1.4h-1zM17 116h1v1.4h-1zM22 116h1v1.4h-1zM25 116h1v1.4h-1zM26 116h1v1.4h-1zM0 118h1v1.4h-1zM14 122h1v1.4h-1zM15 122h1v1.4h-1zM0 124h1v1.4h-1zM10 126h1v1.4h-1zM16 126h1v1.4h-1zM19 126h1v1.4h-1zM23 126h1v1.4h-1zM29 126h1v1.4h-1zM32 126h1v1.4h-1zM37 126h1v1.4h-1zM8 128h1v1.4h-1zM29 128h1v1.4h-1zM33 128h1v1.4h-1zM34 128h1v1.4h-1zM12 130h1v1.4h-1zM17 130h1v1.4h-1zM4 132h1v1.4h-1zM9 132h1v1.4h-1zM15 132h1v1.4h-1zM17 132h1v1.4h-1zM22 132h1v1.4h-1zM25 132h1v1.4h-1zM26 132h1v1.4h-1zM0 134h1v1.4h-1zM18 138h1v1.4h-1zM25 138h1v1.4h-1zM32 138h1v1.4h-1zM40 138h1v1.4h-1zM47 138h1v1.4h-1zM0 140h1v1.4h-1zM10 142h1v1.4h-1zM32 142h1v1.4h-1zM38 142h1v1.4h-1zM45 142h1v1.4h-1zM50 142h1v1.4h-1zM51 142h1v1.4h-1zM10 144h1v1.4h-1zM14 144h1v1.4h-1zM19 144h1v1.4h-1zM21 144h1v1.4h-1zM23 144h1v1.4h-1zM30 144h1v1.4h-1zM33 144h1v1.4h-1zM37 144h1v1.4h-1zM38 144h1v1.4h-1zM4 146h1v1.4h-1zM9 146h1v1.4h-1zM15 146h1v1.4h-1zM17 146h1v1.4h-1zM22 146h1v1.4h-1zM25 146h1v1.4h-1zM26 146h1v1.4h-1zM8 150h1v1.4h-1zM11 150h1v1.4h-1zM16 150h1v1.4h-1zM22 150h1v1.4h-1zM24 150h1v1.4h-1zM28 150h1v1.4h-1zM32 150h1v1.4h-1zM35 150h1v1.4h-1zM36 150h1v1.4h-1zM37 150h1v1.4h-1zM4 152h1v1.4h-1zM0 154h1v1.4h-1zM18 158h1v1.4h-1zM25 158h1v1.4h-1zM32 158h1v1.4h-1zM40 158h1v1.4h-1zM47 158h1v1.4h-1zM0 160h1v1.4h-1zM10 162h1v1.4h-1zM32 162h1v1.4h-1zM38 162h1v1.4h-1zM45 162h1v1.4h-1zM50 162h1v1.4h-1zM51 162h1v1.4h-1zM10 164h1v1.4h-1zM14 164h1v1.4h-1zM19 164h1v1.4h-1zM21 164h1v1.4h-1zM23 164h1v1.4h-1zM30 164h1v1.4h-1zM33 164h1v1.4h-1zM37 164h1v1.4h-1zM38 164h1v1.4h-1zM4 166h1v1.4h-1zM9 166h1v1.4h-1zM15 166h1v1.4h-1zM17 166h1v1.4h-1zM22 166h1v1.4h-1zM25 166h1v1.4h-1zM26 166h1v1.4h-1zM8 170h1v1.4h-1zM11 170h1v1.4h-1zM16 170h1v1.4h-1zM22 170h1v1.4h-1zM24 170h1v1.4h-1zM28 170h1v1.4h-1zM32 170h1v1.4h-1zM35 170h1v1.4h-1zM36 170h1v1.4h-1zM37 170h1v1.4h-1zM4 172h1v1.4h-1zM0 174h1v1.4h-1zM18 178h1v1.4h-1zM25 178h1v1.4h-1zM32 178h1v1.4h-1zM0 180h1v1.4h-1zM4 182h1v1.4h-1zM9 182h1v1.4h-1zM15 182h1v1.4h-1zM29 182h1v1.4h-1zM32 182h1v1.4h-1zM33 182h1v1.4h-1zM11 184h1v1.4h-1zM18 184h1v1.4h-1zM4 186h1v1.4h-1zM9 186h1v1.4h-1zM15 186h1v1.4h-1zM17 186h1v1.4h-1zM22 186h1v1.4h-1zM25 186h1v1.4h-1zM26 186h1v1.4h-1zM8 188h1v1.4h-1zM0 190h1v1.4h-1zM20 194h1v1.4h-1zM33 194h1v1.4h-1zM42 194h1v1.4h-1zM0 196h1v1.4h-1zM10 198h1v1.4h-1zM15 198h1v1.4h-1zM20 198h1v1.4h-1zM21 198h1v1.4h-1zM10 202h1v1.4h-1zM15 202h1v1.4h-1zM26 202h1v1.4h-1zM27 202h1v1.4h-1zM10 206h1v1.4h-1zM15 206h1v1.4h-1zM26 206h1v1.4h-1zM27 206h1v1.4h-1zM8 210h1v1.4h-1zM0 212h1v1.4h-1zM23 216h1v1.4h-1zM33 216h1v1.4h-1zM0 218h1v1.4h-1zM11 220h1v1.4h-1zM8 222h1v1.4h-1zM18 222h1v1.4h-1zM8 224h1v1.4h-1zM11 224h1v1.4h-1zM8 226h1v1.4h-1zM11 226h1v1.4h-1zM8 230h1v1.4h-1zM12 230h1v1.4h-1zM18 230h1v1.4h-1zM2 232h1v1.4h-1zM10 234h1v1.4h-1zM2 236h1v1.4h-1zM8 240h1v1.4h-1zM12 240h1v1.4h-1zM17 240h1v1.4h-1zM2 242h1v1.4h-1zM7 244h1v1.4h-1zM12 244h1v1.4h-1zM5 246h1v1.4h-1zM6 246h1v1.4h-1zM7 246h1v1.4h-1zM2 248h1v1.4h-1zM4 252h1v1.4h-1zM9 252h1v1.4h-1zM10 256h1v1.4h-1zM19 256h1v1.4h-1zM32 256h1v1.4h-1zM35 256h1v1.4h-1zM38 256h1v1.4h-1zM39 256h1v1.4h-1zM6 260h1v1.4h-1zM13 260h1v1.4h-1zM17 260h1v1.4h-1zM20 260h1v1.4h-1zM24 260h1v1.4h-1zM27 260h1v1.4h-1zM30 260h1v1.4h-1zM31 260h1v1.4h-1zM32 260h1v1.4h-1zM2 262h1v1.4h-1zM13 264h1v1.4h-1zM26 264h1v1.4h-1zM28 264h1v1.4h-1zM29 264h1v1.4h-1zM2 266h1v1.4h-1zM10 270h1v1.4h-1zM38 270h1v1.4h-1zM47 270h1v1.4h-1zM50 270h1v1.4h-1zM14 274h1v1.4h-1zM19 274h1v1.4h-1zM22 274h1v1.4h-1zM27 274h1v1.4h-1zM32 274h1v1.4h-1zM33 274h1v1.4h-1zM4 278h1v1.4h-1zM9 278h1v1.4h-1zM15 278h1v1.4h-1zM17 278h1v1.4h-1zM22 278h1v1.4h-1zM25 278h1v1.4h-1zM26 278h1v1.4h-1zM8 282h1v1.4h-1zM11 282h1v1.4h-1zM16 282h1v1.4h-1zM22 282h1v1.4h-1zM24 282h1v1.4h-1zM28 282h1v1.4h-1zM32 282h1v1.4h-1zM35 282h1v1.4h-1zM36 282h1v1.4h-1zM37 282h1v1.4h-1zM4 284h1v1.4h-1zM0 286h1v1.4h-1zM10 290h1v1.4h-1zM11 290h1v1.4h-1zM0 292h1v1.4h-1zM4 296h1v1.4h-1zM16 296h1v1.4h-1zM32 296h1v1.4h-1zM33 296h1v1.4h-1zM4 304h1v1.4h-1zM10 304h1v1.4h-1zM11 304h1v1.4h-1zM12 304h1v1.4h-1zM8 308h1v1.4h-1zM9 308h1v1.4h-1zM12 308h1v1.4h-1zM18 308h1v1.4h-1zM19 308h1v1.4h-1zM20 308h1v1.4h-1zM2 310h1v1.4h-1zM9 314h1v1.4h-1zM14 314h1v1.4h-1zM15 314h1v1.4h-1zM2 316h1v1.4h-1zM4 320h1v1.4h-1zM10 320h1v1.4h-1zM11 320h1v1.4h-1zM12 320h1v1.4h-1zM8 326h1v1.4h-1zM14 326h1v1.4h-1zM26 326h1v1.4h-1zM27 326h1v1.4h-1zM15 330h1v1.4h-1zM18 330h1v1.4h-1zM34 330h1v1.4h-1zM45 330h1v1.4h-1zM46 330h1v1.4h-1zM47 330h1v1.4h-1zM16 336h1v1.4h-1zM31 336h1v1.4h-1zM42 336h1v1.4h-1zM50 336h1v1.4h-1zM11 340h1v1.4h-1zM16 340h1v1.4h-1zM34 340h1v1.4h-1zM45 340h1v1.4h-1zM46 340h1v1.4h-1zM8 346h1v1.4h-1zM14 346h1v1.4h-1zM15 346h1v1.4h-1zM16 346h1v1.4h-1zM8 348h1v1.4h-1zM32 348h1v1.4h-1zM33 348h1v1.4h-1zM34 348h1v1.4h-1zM4 352h1v1.4h-1zM9 352h1v1.4h-1zM15 352h1v1.4h-1zM17 352h1v1.4h-1zM22 352h1v1.4h-1zM25 352h1v1.4h-1zM26 352h1v1.4h-1zM15 358h1v1.4h-1zM19 358h1v1.4h-1zM24 358h1v1.4h-1zM29 358h1v1.4h-1zM39 358h1v1.4h-1zM40 358h1v1.4h-1zM15 362h1v1.4h-1zM19 362h1v1.4h-1zM25 362h1v1.4h-1zM30 362h1v1.4h-1zM45 362h1v1.4h-1zM46 362h1v1.4h-1zM10 368h1v1.4h-1zM17 368h1v1.4h-1zM18 368h1v1.4h-1zM19 368h1v1.4h-1zM15 370h1v1.4h-1zM19 370h1v1.4h-1zM29 370h1v1.4h-1zM35 370h1v1.4h-1zM36 370h1v1.4h-1zM8 372h1v1.4h-1zM12 372h1v1.4h-1zM19 372h1v1.4h-1zM25 372h1v1.4h-1zM26 372h1v1.4h-1zM10 374h1v1.4h-1zM15 374h1v1.4h-1zM20 374h1v1.4h-1zM21 374h1v1.4h-1zM0 376h1v1.4h-1zM9 380h1v1.4h-1zM10 380h1v1.4h-1zM0 382h1v1.4h-1zM8 386h1v1.4h-1zM18 386h1v1.4h-1zM19 386h1v1.4h-1zM20 386h1v1.4h-1zM5 390h1v1.4h-1zM12 390h1v1.4h-1zM20 390h1v1.4h-1zM2 392h1v1.4h-1zM17 398h1v1.4h-1zM23 398h1v1.4h-1zM7 400h1v1.4h-1zM14 400h1v1.4h-1zM24 400h1v1.4h-1zM25 400h1v1.4h-1zM28 400h1v1.4h-1zM12 402h1v1.4h-1zM17 402h1v1.4h-1zM18 402h1v1.4h-1zM19 402h1v1.4h-1zM7 404h1v1.4h-1zM14 404h1v1.4h-1zM24 404h1v1.4h-1zM25 404h1v1.4h-1zM28 404h1v1.4h-1zM4 406h1v1.4h-1zM14 408h1v1.4h-1zM26 408h1v1.4h-1zM31 408h1v1.4h-1zM32 408h1v1.4h-1zM12 410h1v1.4h-1zM17 410h1v1.4h-1zM11 412h1v1.4h-1zM12 412h1v1.4h-1zM13 412h1v1.4h-1zM12 414h1v1.4h-1zM17 414h1v1.4h-1zM14 416h1v1.4h-1zM39 416h1v1.4h-1zM40 416h1v1.4h-1zM41 416h1v1.4h-1zM4 418h1v1.4h-1zM12 422h1v1.4h-1zM19 422h1v1.4h-1zM20 422h1v1.4h-1zM21 422h1v1.4h-1zM7 430h1v1.4h-1zM18 430h1v1.4h-1zM33 430h1v1.4h-1zM36 430h1v1.4h-1zM4 432h1v1.4h-1zM16 434h1v1.4h-1zM19 434h1v1.4h-1zM4 436h1v1.4h-1zM4 440h1v1.4h-1zM15 442h1v1.4h-1zM16 442h1v1.4h-1zM17 442h1v1.4h-1zM4 444h1v1.4h-1zM18 448h1v1.4h-1zM33 448h1v1.4h-1zM44 448h1v1.4h-1zM52 448h1v1.4h-1zM17 450h1v1.4h-1zM21 450h1v1.4h-1zM26 450h1v1.4h-1zM31 450h1v1.4h-1zM41 450h1v1.4h-1zM42 450h1v1.4h-1zM17 452h1v1.4h-1zM21 452h1v1.4h-1zM27 452h1v1.4h-1zM32 452h1v1.4h-1zM47 452h1v1.4h-1zM48 452h1v1.4h-1zM17 454h1v1.4h-1zM21 454h1v1.4h-1zM31 454h1v1.4h-1zM37 454h1v1.4h-1zM38 454h1v1.4h-1zM12 456h1v1.4h-1zM23 456h1v1.4h-1zM24 456h1v1.4h-1zM25 456h1v1.4h-1zM2 458h1v1.4h-1zM5 462h1v1.4h-1zM8 462h1v1.4h-1zM13 462h1v1.4h-1zM19 462h1v1.4h-1zM21 462h1v1.4h-1zM26 462h1v1.4h-1zM29 462h1v1.4h-1zM31 462h1v1.4h-1zM34 462h1v1.4h-1zM2 464h1v1.4h-1zM7 466h1v1.4h-1zM14 466h1v1.4h-1zM15 466h1v1.4h-1zM18 466h1v1.4h-1zM4 468h1v1.4h-1zM9 472h1v1.4h-1zM16 472h1v1.4h-1zM26 472h1v1.4h-1zM27 472h1v1.4h-1zM30 472h1v1.4h-1zM6 474h1v1.4h-1zM16 478h1v1.4h-1zM28 478h1v1.4h-1zM35 478h1v1.4h-1zM42 478h1v1.4h-1zM43 478h1v1.4h-1zM6 480h1v1.4h-1zM14 482h1v1.4h-1zM21 482h1v1.4h-1zM31 482h1v1.4h-1zM32 482h1v1.4h-1zM35 482h1v1.4h-1zM6 484h1v1.4h-1zM11 490h1v1.4h-1zM16 490h1v1.4h-1zM8 492h1v1.4h-1zM16 494h1v1.4h-1zM21 494h1v1.4h-1zM26 494h1v1.4h-1zM32 494h1v1.4h-1zM37 494h1v1.4h-1zM42 494h1v1.4h-1zM43 494h1v1.4h-1zM12 496h1v1.4h-1zM17 496h1v1.4h-1zM23 496h1v1.4h-1zM25 496h1v1.4h-1zM30 496h1v1.4h-1zM33 496h1v1.4h-1zM34 496h1v1.4h-1zM16 498h1v1.4h-1zM19 498h1v1.4h-1zM24 498h1v1.4h-1zM30 498h1v1.4h-1zM32 498h1v1.4h-1zM36 498h1v1.4h-1zM40 498h1v1.4h-1zM43 498h1v1.4h-1zM44 498h1v1.4h-1zM45 498h1v1.4h-1zM12 500h1v1.4h-1zM8 502h1v1.4h-1zM8 506h1v1.4h-1zM16 508h1v1.4h-1zM21 508h1v1.4h-1zM26 508h1v1.4h-1zM29 508h1v1.4h-1zM34 508h1v1.4h-1zM39 508h1v1.4h-1zM40 508h1v1.4h-1zM12 510h1v1.4h-1zM17 510h1v1.4h-1zM23 510h1v1.4h-1zM25 510h1v1.4h-1zM30 510h1v1.4h-1zM33 510h1v1.4h-1zM34 510h1v1.4h-1zM16 512h1v1.4h-1zM19 512h1v1.4h-1zM24 512h1v1.4h-1zM30 512h1v1.4h-1zM32 512h1v1.4h-1zM36 512h1v1.4h-1zM40 512h1v1.4h-1zM43 512h1v1.4h-1zM44 512h1v1.4h-1zM45 512h1v1.4h-1zM12 514h1v1.4h-1zM8 516h1v1.4h-1zM13 520h1v1.4h-1zM15 520h1v1.4h-1zM20 520h1v1.4h-1zM6 522h1v1.4h-1zM4 524h1v1.4h-1zM12 526h1v1.4h-1zM19 526h1v1.4h-1zM20 526h1v1.4h-1zM23 526h1v1.4h-1zM4 528h1v1.4h-1zM9 532h1v1.4h-1zM15 532h1v1.4h-1zM16 532h1v1.4h-1zM22 532h1v1.4h-1zM6 534h1v1.4h-1zM14 538h1v1.4h-1zM19 538h1v1.4h-1zM20 538h1v1.4h-1zM21 538h1v1.4h-1zM18 542h1v1.4h-1zM26 542h1v1.4h-1zM36 542h1v1.4h-1zM10 544h1v1.4h-1zM15 544h1v1.4h-1zM21 544h1v1.4h-1zM23 544h1v1.4h-1zM28 544h1v1.4h-1zM31 544h1v1.4h-1zM32 544h1v1.4h-1zM6 546h1v1.4h-1zM14 548h1v1.4h-1zM20 548h1v1.4h-1zM21 548h1v1.4h-1zM27 548h1v1.4h-1zM6 550h1v1.4h-1zM17 554h1v1.4h-1zM18 554h1v1.4h-1zM19 554h1v1.4h-1zM6 556h1v1.4h-1zM14 558h1v1.4h-1zM20 558h1v1.4h-1zM21 558h1v1.4h-1zM27 558h1v1.4h-1zM6 560h1v1.4h-1zM17 564h1v1.4h-1zM18 564h1v1.4h-1zM19 564h1v1.4h-1zM6 566h1v1.4h-1zM14 568h1v1.4h-1zM20 568h1v1.4h-1zM21 568h1v1.4h-1zM27 568h1v1.4h-1zM6 570h1v1.4h-1zM11 576h1v1.4h-1zM18 576h1v1.4h-1zM28 576h1v1.4h-1zM29 576h1v1.4h-1zM32 576h1v1.4h-1zM16 578h1v1.4h-1zM21 578h1v1.4h-1zM22 578h1v1.4h-1zM23 578h1v1.4h-1zM11 580h1v1.4h-1zM18 580h1v1.4h-1zM28 580h1v1.4h-1zM29 580h1v1.4h-1zM32 580h1v1.4h-1zM8 582h1v1.4h-1zM18 584h1v1.4h-1zM30 584h1v1.4h-1zM35 584h1v1.4h-1zM36 584h1v1.4h-1zM16 586h1v1.4h-1zM21 586h1v1.4h-1zM15 588h1v1.4h-1zM16 588h1v1.4h-1zM17 588h1v1.4h-1zM16 590h1v1.4h-1zM21 590h1v1.4h-1zM18 592h1v1.4h-1zM43 592h1v1.4h-1zM44 592h1v1.4h-1zM45 592h1v1.4h-1zM8 594h1v1.4h-1zM16 598h1v1.4h-1zM23 598h1v1.4h-1zM24 598h1v1.4h-1zM25 598h1v1.4h-1zM11 606h1v1.4h-1zM22 606h1v1.4h-1zM37 606h1v1.4h-1zM40 606h1v1.4h-1zM8 608h1v1.4h-1zM20 610h1v1.4h-1zM23 610h1v1.4h-1zM8 612h1v1.4h-1zM8 616h1v1.4h-1zM19 618h1v1.4h-1zM20 618h1v1.4h-1zM21 618h1v1.4h-1zM8 620h1v1.4h-1zM22 624h1v1.4h-1zM37 624h1v1.4h-1zM48 624h1v1.4h-1zM21 626h1v1.4h-1zM25 626h1v1.4h-1zM30 626h1v1.4h-1zM35 626h1v1.4h-1zM45 626h1v1.4h-1zM46 626h1v1.4h-1zM21 630h1v1.4h-1zM25 630h1v1.4h-1zM31 630h1v1.4h-1zM36 630h1v1.4h-1zM51 630h1v1.4h-1zM52 630h1v1.4h-1zM21 632h1v1.4h-1zM25 632h1v1.4h-1zM35 632h1v1.4h-1zM41 632h1v1.4h-1zM42 632h1v1.4h-1zM16 634h1v1.4h-1zM27 634h1v1.4h-1zM28 634h1v1.4h-1zM29 634h1v1.4h-1zM6 636h1v1.4h-1zM14 638h1v1.4h-1zM20 638h1v1.4h-1zM21 638h1v1.4h-1zM27 638h1v1.4h-1zM6 640h1v1.4h-1zM11 644h1v1.4h-1zM18 644h1v1.4h-1zM28 644h1v1.4h-1zM29 644h1v1.4h-1zM32 644h1v1.4h-1zM16 646h1v1.4h-1zM21 646h1v1.4h-1zM22 646h1v1.4h-1zM23 646h1v1.4h-1zM11 648h1v1.4h-1zM18 648h1v1.4h-1zM28 648h1v1.4h-1zM29 648h1v1.4h-1zM32 648h1v1.4h-1zM8 650h1v1.4h-1zM18 652h1v1.4h-1zM30 652h1v1.4h-1zM35 652h1v1.4h-1zM36 652h1v1.4h-1zM16 654h1v1.4h-1zM21 654h1v1.4h-1zM15 656h1v1.4h-1zM16 656h1v1.4h-1zM17 656h1v1.4h-1zM16 658h1v1.4h-1zM21 658h1v1.4h-1zM8 660h1v1.4h-1zM6 662h1v1.4h-1zM4 664h1v1.4h-1zM2 666h1v1.4h-1zM0 668h1v1.4h-1z"/><path fill="#6f6f5a" d="M11 52h6v1.4h-6zM17 54h8v1.4h-8zM10 56h3v1.4h-3zM10 58h6v1.4h-6zM5 106h9v1.4h-9zM9 112h20v1.4h-20zM5 116h4v1.4h-4zM5 122h9v1.4h-9zM9 128h20v1.4h-20zM5 132h4v1.4h-4zM5 138h13v1.4h-13zM11 142h21v1.4h-21zM15 144h4v1.4h-4zM5 146h4v1.4h-4zM12 150h4v1.4h-4zM5 158h13v1.4h-13zM11 162h21v1.4h-21zM15 164h4v1.4h-4zM5 166h4v1.4h-4zM12 170h4v1.4h-4zM5 178h13v1.4h-13zM5 182h4v1.4h-4zM5 186h4v1.4h-4zM5 194h15v1.4h-15zM2 198h8v1.4h-8zM2 202h8v1.4h-8zM2 206h8v1.4h-8zM5 216h18v1.4h-18zM2 256h8v1.4h-8zM11 270h27v1.4h-27zM2 274h12v1.4h-12zM5 278h4v1.4h-4zM12 282h4v1.4h-4zM5 290h5v1.4h-5zM5 296h11v1.4h-11zM5 304h5v1.4h-5zM13 308h5v1.4h-5zM4 314h5v1.4h-5zM5 320h5v1.4h-5zM9 326h5v1.4h-5zM2 330h13v1.4h-13zM20 330h14v1.4h-14zM17 340h17v1.4h-17zM9 346h5v1.4h-5zM9 348h23v1.4h-23zM5 352h4v1.4h-4zM2 358h13v1.4h-13zM2 362h13v1.4h-13zM11 368h6v1.4h-6zM2 370h13v1.4h-13zM9 372h3v1.4h-3zM11 374h4v1.4h-4zM5 380h4v1.4h-4zM9 386h9v1.4h-9zM13 402h4v1.4h-4zM15 408h11v1.4h-11zM6 412h5v1.4h-5zM15 416h24v1.4h-24zM13 422h6v1.4h-6zM4 450h13v1.4h-13zM4 452h13v1.4h-13zM4 454h13v1.4h-13zM13 456h10v1.4h-10zM9 462h4v1.4h-4zM29 478h6v1.4h-6zM17 494h4v1.4h-4zM13 496h4v1.4h-4zM20 498h4v1.4h-4zM17 508h4v1.4h-4zM13 510h4v1.4h-4zM20 512h4v1.4h-4zM15 538h4v1.4h-4zM11 544h4v1.4h-4zM8 554h9v1.4h-9zM8 564h9v1.4h-9zM17 578h4v1.4h-4zM19 584h11v1.4h-11zM10 588h5v1.4h-5zM19 592h24v1.4h-24zM17 598h6v1.4h-6zM8 626h13v1.4h-13zM8 630h13v1.4h-13zM8 632h13v1.4h-13zM17 634h10v1.4h-10zM17 646h4v1.4h-4zM19 652h11v1.4h-11zM10 656h5v1.4h-5z"/></svg><!--/MINI-->
<div class="abs" style="left:1010px;top:134px;width:1px;height:612px;background:#303030"></div>
<div class="abs" style="left:1010px;top:87px;width:13px;height:47px;background:#474747;border-left:1px solid #555"></div>
<div class="abs" style="left:1023px;top:0;width:1px;height:768px;background:#6f7873"></div>
<div id="status" class="abs">
<svg class="abs" style="left:15px;top:4px" width="14" height="14" viewBox="0 0 14 14" fill="none" stroke="#fff" stroke-width="1.1"><circle cx="7" cy="7" r="6"/><path d="M4.5 4.5 L9.5 9.5 M9.5 4.5 L4.5 9.5"/></svg>
<span class="abs sb" style="left:32px">0</span>
<svg class="abs" style="left:43px;top:4px" width="14" height="14" viewBox="0 0 14 14" fill="none" stroke="#fff" stroke-width="1.1"><path d="M7 1 L13.2 12.5 H0.8 Z"/><path d="M7 5 V9 M7 10 V11.3"/></svg>
<span class="abs sb" style="left:60px">0</span>
<svg class="abs" style="left:82px;top:4px" width="14" height="14" viewBox="0 0 14 14" fill="none" stroke="#fff" stroke-width="1.1" stroke-linejoin="round"><path d="M1.5 7 L7 1.5 L12.5 7 M3 5.5 V12.5 H5.5 V8.5 H8.5 V12.5 H11 V5.5"/></svg>
<svg class="abs" style="left:112px;top:4px" width="14" height="14" viewBox="0 0 14 14" fill="none" stroke="#fff" stroke-width="1.2"><path d="M1 7.5 L4.8 11.3 L13 3"/></svg>
<svg class="abs" style="left:142px;top:4px" width="14" height="14" viewBox="0 0 14 14" fill="none" stroke="#fff" stroke-width="1.2"><path d="M1 7 H12.5 M8 2.5 L12.5 7 L8 11.5"/></svg>
<svg class="abs" style="left:172px;top:4px" width="14" height="14" viewBox="0 0 14 14" fill="none" stroke="#fff" stroke-width="1.1"><path d="M1.5 3 H12.5 M5 3 V1.5 H9 V3 M2.8 3 L3.5 13 H10.5 L11.2 3 M5.5 5 V11 M7 5 V11 M8.5 5 V11"/></svg>
<svg class="abs" style="left:202px;top:4px" width="14" height="14" viewBox="0 0 14 14" fill="none" stroke="#fff" stroke-width="1.1" stroke-linejoin="round"><path d="M4 1 H10 M5 1 V5.5 L1.5 12.5 H12.5 L9 5.5 V1"/></svg>
<svg class="abs" style="left:231px;top:4px" width="14" height="14" viewBox="0 0 14 14" fill="none" stroke="#fff" stroke-width="1.2"><path d="M5 1 V4 M9 1 V4 M3.5 4 H10.5 V7 Q10.5 10 7 10 Q3.5 10 3.5 7 Z M7 10 V13.5"/></svg>
<svg class="abs" style="left:262px;top:4px" width="14" height="14" viewBox="0 0 14 14" fill="none" stroke="#fff" stroke-width="1.1"><rect x="1" y="1" width="12" height="12" rx="1"/><path d="M5 4 L8 7 L5 10"/></svg>
<svg class="abs" style="left:292px;top:4px" width="14" height="14" viewBox="0 0 14 14" fill="none" stroke="#fff" stroke-width="1.1"><path d="M1 3 H5 L6 4 H13 V12 H1 Z"/><circle cx="5" cy="9" r="2"/></svg>
<span class="abs sb" style="left:310px;transform:scaleX(0.945)">Default (VisualDAP_MP)</span>
<span class="abs sb" style="left:631px;transform:scaleX(0.893)">行 1、列 1</span>
<span class="abs sb" style="left:697px;transform:scaleX(0.783)">スペース: 2</span>
<span class="abs sb" style="left:762px">UTF-8</span>
<span class="abs sb" style="left:809px;transform:scaleX(0.863)">CRLF</span>
<span class="abs sb" style="left:851px">C++</span>
<span class="abs sb" style="left:892px">PlatformIO</span>
<svg class="abs" style="left:965px;top:4px" width="15" height="14" viewBox="0 0 15 14" fill="none" stroke="#fff" stroke-width="1.1"><circle cx="6" cy="4.5" r="3"/><path d="M1 13 Q1 8.5 6 8.5 Q8 8.5 9 9.5 M9 4 H14 V8.5 H12 L10.5 10"/></svg>
<svg class="abs" style="left:994px;top:4px" width="14" height="14" viewBox="0 0 14 14" fill="none" stroke="#fff" stroke-width="1.1"><path d="M3 10.5 V6 Q3 2 7 2 Q11 2 11 6 V10.5 L12.5 11.5 H1.5 Z M5.5 12.5 Q7 14 8.5 12.5"/></svg>
</div>
<div class="abs" style="left:0;top:0;width:1px;height:718px;background:#a8a8a8;z-index:5"></div>
<div class="abs" style="left:0;top:718px;width:1px;height:28px;background:#3c4652;z-index:5"></div>
<div class="abs" style="left:0;top:746px;width:1px;height:22px;background:#b8b8b8;z-index:5"></div>
<div class="abs" style="left:0;top:767px;width:1024px;height:1px;background:#cfc8c0;z-index:5"></div>
<div class="abs" style="left:0;top:0;width:1024px;height:1px;background:#8a8580;z-index:5"></div>
</body></html>
